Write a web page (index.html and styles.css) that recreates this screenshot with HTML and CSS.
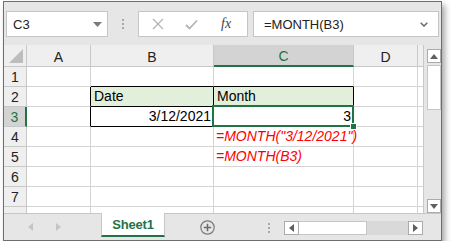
FILE: index.html
```html
<!DOCTYPE html>
<html>
<head>
<meta charset="utf-8">
<link rel="stylesheet" href="styles.css">
</head>
<body>
<div class="window">
  <div class="toolbar">
    <div class="namebox">
      <span class="name">C3</span>
      <svg class="dd" width="9" height="5" viewBox="0 0 9 5"><polygon points="0,0 9,0 4.5,5" fill="#7a7a7a"/></svg>
    </div>
    <div class="sep"><i></i><i></i><i></i></div>
    <div class="fxbox">
      <svg width="12" height="12" viewBox="0 0 12 12"><path d="M1 1 L11 11 M11 1 L1 11" stroke="#b5b5b5" stroke-width="1.3" fill="none"/></svg>
      <svg width="13" height="11" viewBox="0 0 13 11"><path d="M1 6 L4.5 9.5 L12 1.5" stroke="#b5b5b5" stroke-width="1.8" fill="none"/></svg>
      <span class="fx">fx</span>
    </div>
    <div class="formula">
      <span class="ftext">=MONTH(B3)</span>
      <svg class="chev" width="8" height="5" viewBox="0 0 8 5"><path d="M0.7 0.7 L4 4 L7.3 0.7" stroke="#6a6a6a" stroke-width="1.5" fill="none"/></svg>
    </div>
  </div>
  <div class="main">
    <div class="grid">
      <div class="hd corner"><svg width="14" height="14" viewBox="0 0 14 14"><polygon points="14,0 14,14 0,14" fill="#bdbdbd"/></svg></div>
      <div class="hd col">A</div>
      <div class="hd col">B</div>
      <div class="hd col sel">C</div>
      <div class="hd col">D</div>
      <div class="hd col e"></div>

      <div class="hd row">1</div>
      <div class="c"></div><div class="c bb"></div><div class="c bb"></div><div class="c"></div><div class="c e"></div>

      <div class="hd row">2</div>
      <div class="c br"></div><div class="c blk fill">Date</div><div class="c blk fill">Month</div><div class="c"></div><div class="c e"></div>

      <div class="hd row rsel">3</div>
      <div class="c br"></div><div class="c blk num">3/12/2021</div><div class="c blk num active">3<span class="selbox"></span><span class="handle"></span></div><div class="c"></div><div class="c e"></div>

      <div class="hd row">4</div>
      <div class="c"></div><div class="c"></div><div class="c red">=MONTH("3/12/2021")</div><div class="c"></div><div class="c e"></div>

      <div class="hd row">5</div>
      <div class="c"></div><div class="c"></div><div class="c red">=MONTH(B3)</div><div class="c"></div><div class="c e"></div>

      <div class="hd row">6</div>
      <div class="c"></div><div class="c"></div><div class="c"></div><div class="c"></div><div class="c e"></div>

      <div class="hd row">7</div>
      <div class="c"></div><div class="c"></div><div class="c"></div><div class="c"></div><div class="c e"></div>

      <div class="hd row part"></div>
      <div class="c part"></div><div class="c part"></div><div class="c part"></div><div class="c part"></div><div class="c e part"></div>
    </div>
    <div class="vscroll">
      <div class="sbtn"><svg width="8" height="5" viewBox="0 0 8 5"><polygon points="0,5 8,5 4,0" fill="#606060"/></svg></div>
      <div class="vthumb"></div>
      <div class="vspace"></div>
      <div class="sbtn"><svg width="8" height="5" viewBox="0 0 8 5"><polygon points="0,0 8,0 4,5" fill="#606060"/></svg></div>
    </div>
  </div>
  <div class="tabbar">
    <div class="nav">
      <svg width="5" height="8" viewBox="0 0 5 8"><polygon points="5,0 5,8 0,4" fill="#c4c4c4"/></svg>
      <svg width="5" height="8" viewBox="0 0 5 8"><polygon points="0,0 0,8 5,4" fill="#c4c4c4"/></svg>
    </div>
    <div class="tab">Sheet1</div>
    <div class="plus"><svg width="15" height="15" viewBox="0 0 15 15"><circle cx="7.5" cy="7.5" r="6.7" stroke="#7a7a7a" stroke-width="1.2" fill="none"/><path d="M7.5 3.8 V11.2 M3.8 7.5 H11.2" stroke="#6a6a6a" stroke-width="1.5"/></svg></div>
    <div class="sep2"><i></i><i></i><i></i></div>
    <div class="hscroll">
      <div class="hbtn"><svg width="5" height="8" viewBox="0 0 5 8"><polygon points="5,0 5,8 0,4" fill="#606060"/></svg></div>
      <div class="hthumb"></div>
      <div class="htrack"></div>
      <div class="hbtn"><svg width="5" height="8" viewBox="0 0 5 8"><polygon points="0,0 0,8 5,4" fill="#606060"/></svg></div>
    </div>
  </div>
</div>
</body>
</html>
```
FILE: styles.css
```css
html, body { margin: 0; padding: 0; background: #ffffff; }
body { font-family: "Liberation Sans", Arial, sans-serif; }

.window {
  margin: 1px 0 0 3px;
  width: 437px;
  height: 238px;
  border: 1px solid #6e6e6e;
  background: #e6e6e6;
  box-shadow: 3px 4px 6px rgba(0,0,0,0.35);
  display: flex;
  flex-direction: column;
}

.toolbar {
  height: 43px;
  box-sizing: border-box;
  padding: 9px 2px 0 2px;
  display: flex;
  align-items: flex-start;
}
.namebox {
  width: 102px;
  height: 26px;
  box-sizing: border-box;
  background: #fff;
  border: 1px solid #c6c6c6;
  display: flex;
  align-items: center;
  padding: 0 5px 0 6px;
  font-size: 13px;
  color: #222;
}
.name { flex: 1; }
.dd { margin-top: 1px; }
.sep {
  width: 30px;
  height: 26px;
  display: flex;
  flex-direction: column;
  align-items: center;
  justify-content: center;
  gap: 2px;
}
.sep i, .sep2 i { display: block; width: 2px; height: 2px; background: #a8a8a8; }
.fxbox {
  width: 110px;
  height: 26px;
  box-sizing: border-box;
  background: #fff;
  border: 1px solid #c6c6c6;
  display: flex;
  align-items: center;
  padding-left: 13px;
  gap: 21px;
}
.fx {
  font-family: "Liberation Serif", serif;
  font-style: italic;
  font-size: 14px;
  color: #444;
  margin-left: 2px;
}
.formula {
  margin-left: 5px;
  flex: 1;
  height: 26px;
  box-sizing: border-box;
  background: #fff;
  border: 1px solid #c6c6c6;
  display: flex;
  align-items: center;
  padding: 0 10px 0 10px;
  font-size: 13px;
  color: #222;
}
.ftext { flex: 1; }

.main { display: flex; height: 168px; }
.grid {
  width: 419px;
  background: #fff;
  display: grid;
  grid-template-columns: 23px 64px 123px 140px 64px 5px;
  grid-template-rows: 22px repeat(7, 20px) 6px;
  font-size: 14px;
  color: #000;
  overflow: hidden;
}
.c, .hd {
  box-sizing: border-box;
  border-right: 1px solid #d4d4d4;
  border-bottom: 1px solid #d4d4d4;
  white-space: nowrap;
  position: relative;
}
.c {
  display: flex;
  align-items: flex-end;
  padding: 0 2px 2px 3px;
  line-height: 16px;
  overflow: visible;
}
.c.e, .hd.e { border-right: none; }
.hd {
  background: #efefef;
  border-right-color: #c8c8c8;
  border-bottom-color: #c8c8c8;
  display: flex;
  align-items: center;
  justify-content: center;
  color: #222;
}
.hd.col { padding-top: 2px; }
.corner { justify-content: flex-end; align-items: flex-end; padding: 0 3px 3px 0; }
.hd.sel { background: #d3d3d3; color: #217346; border-bottom: 2px solid #217346; }
.hd.rsel { background: #d3d3d3; color: #217346; border-right: 2px solid #217346; }
.hd.row { padding-top: 1px; }
.part { border-bottom: none; }

.bb { border-bottom-color: #000; }
.br { border-right-color: #000; }
.blk { border-right-color: #000; border-bottom-color: #000; }
.fill { background: #e2efda; }
.num { justify-content: flex-end; }
.red { color: #ff0000; font-style: italic; padding-left: 2px; z-index: 1; }
.active { z-index: 2; }
.selbox {
  position: absolute;
  left: -2px;
  top: -2px;
  right: -1px;
  bottom: -1px;
  border: 2px solid #217346;
}
.handle {
  position: absolute;
  right: -4px;
  bottom: -4px;
  width: 5px;
  height: 5px;
  background: #217346;
  border: 1px solid #fff;
}

.vscroll {
  width: 17px;
  box-sizing: border-box;
  padding: 4px 0 0 3px;
  display: flex;
  flex-direction: column;
  background: #e6e6e6;
  border-left: 1px solid #c8c8c8;
}
.sbtn {
  width: 14px;
  height: 14px;
  box-sizing: border-box;
  background: #fff;
  border: 1px solid #ababab;
  display: flex;
  align-items: center;
  justify-content: center;
}
.vthumb {
  margin-top: 2px;
  width: 14px;
  height: 45px;
  box-sizing: border-box;
  background: #fff;
  border: 1px solid #c6c6c6;
}
.vspace { flex: 1; }

.tabbar {
  flex: 1;
  border-top: 1px solid #c6c6c6;
  display: flex;
  align-items: flex-start;
}
.nav {
  width: 97px;
  height: 26px;
  display: flex;
  align-items: center;
  padding-left: 24px;
  box-sizing: border-box;
  gap: 23px;
}
.tab {
  width: 64px;
  height: 24px;
  box-sizing: border-box;
  background: #fff;
  border-left: 1px solid #c6c6c6;
  border-right: 1px solid #c6c6c6;
  border-bottom: 2px solid #217346;
  margin-top: -1px;
  display: flex;
  align-items: center;
  justify-content: center;
  font-weight: bold;
  font-size: 13px;
  color: #217346;
  letter-spacing: -0.2px;
}
.plus { margin: 6px 0 0 35px; height: 15px; }
.sep2 {
  margin: 9px 0 0 53px;
  display: flex;
  flex-direction: column;
  gap: 2px;
}
.hscroll {
  margin: 7px 0 0 14px;
  width: 139px;
  height: 14px;
  display: flex;
}
.hbtn {
  width: 15px;
  height: 14px;
  box-sizing: border-box;
  background: #fff;
  border: 1px solid #ababab;
  display: flex;
  align-items: center;
  justify-content: center;
}
.hthumb {
  width: 68px;
  height: 14px;
  box-sizing: border-box;
  background: #fff;
  border: 1px solid #c6c6c6;
  border-left: none;
}
.htrack { flex: 1; background: #d9d9d9; }
```
